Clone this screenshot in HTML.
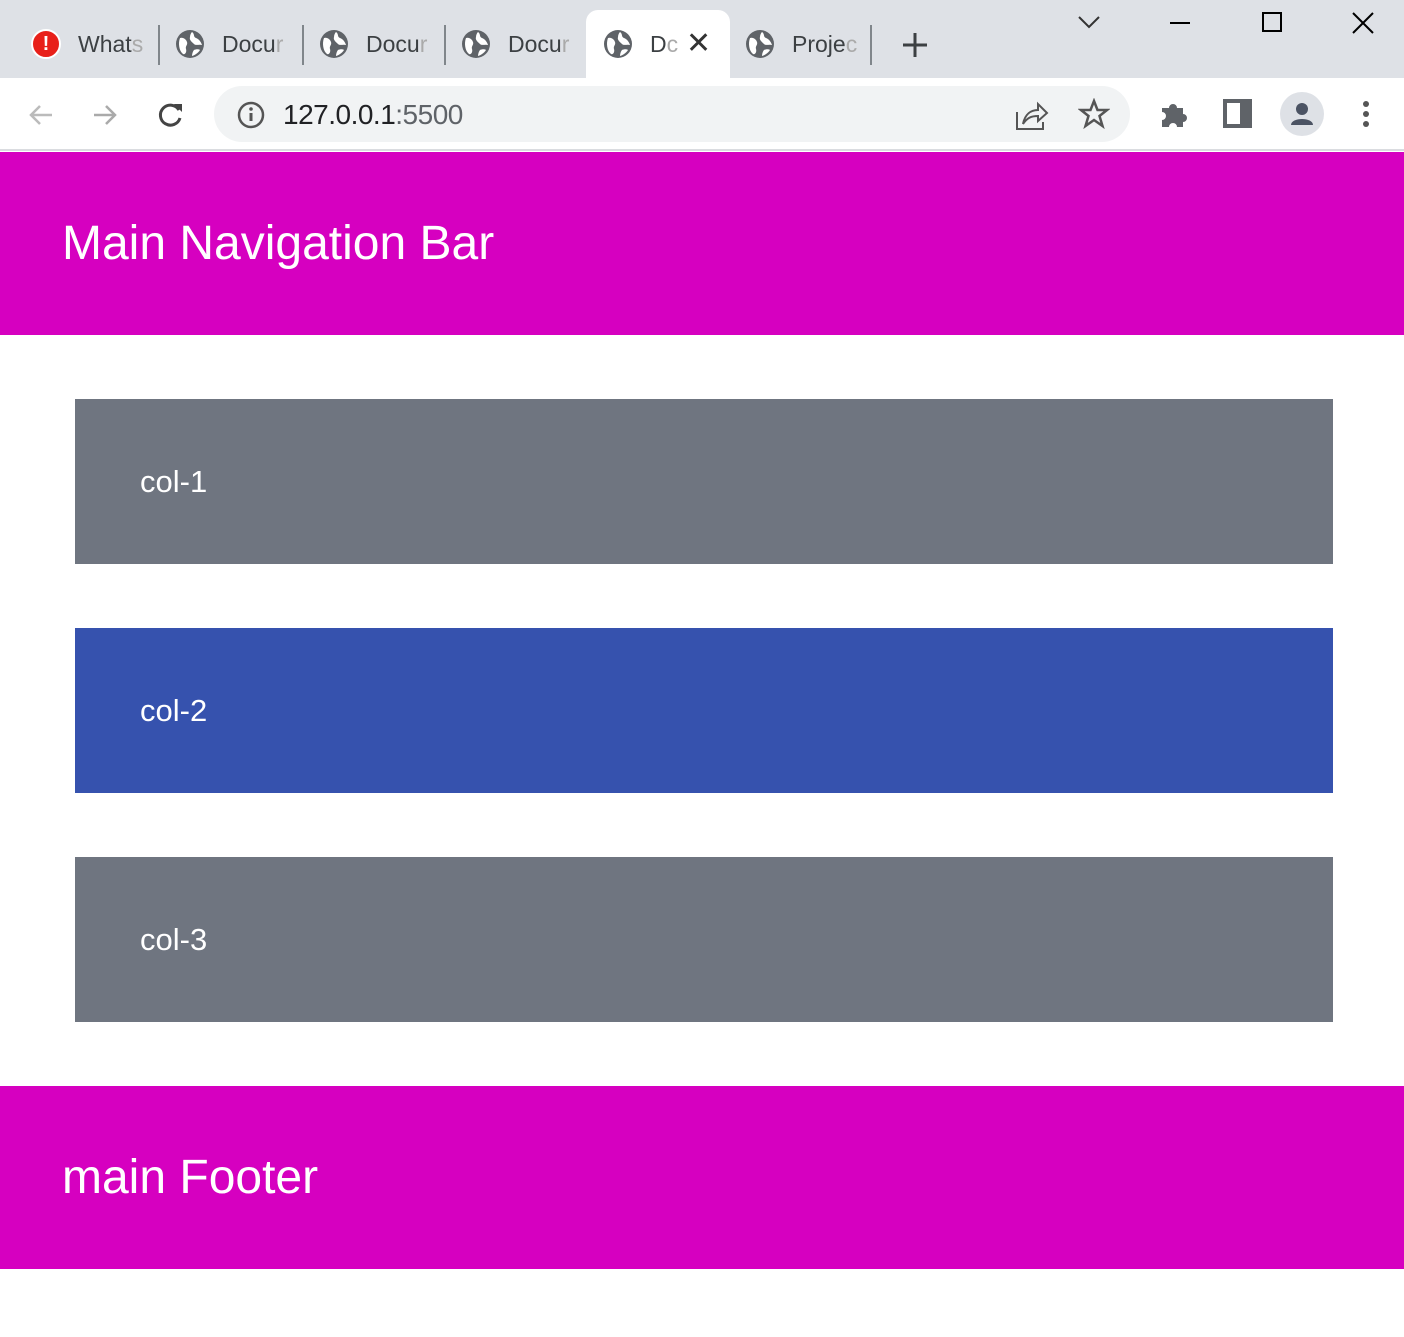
<!DOCTYPE html>
<html><head><style>
*{margin:0;padding:0;box-sizing:border-box}
body{width:1404px;height:1337px;background:#fff;font-family:"Liberation Sans",sans-serif;position:relative;overflow:hidden}
.abs{position:absolute}
.tabbar{left:0;top:0;width:1404px;height:78px;background:#dee1e6}
.tab{top:28px;font-size:23px;color:#3c4043;height:32px;line-height:32px}
.sep{top:25px;width:2px;height:40px;background:#80868b}
.globe{width:30px;height:30px}
.toolbar{left:0;top:78px;width:1404px;height:73px;background:#fff;border-bottom:2px solid #dadce0}
.omni{left:214px;top:86px;width:916px;height:56px;border-radius:28px;background:#f1f3f4}
.nav{left:0;top:152px;width:1404px;height:183px;background:#d600c0;color:#fff;font-size:48px;padding-left:62px;line-height:183px}
.box{left:75px;width:1258px;height:165px;color:#fff;font-size:31px;padding-left:65px;line-height:165px}
.foot{left:0;top:1086px;width:1404px;height:183px;background:#d600c0;color:#fff;font-size:48px;padding-left:62px;line-height:183px}
</style></head><body>
<svg width="0" height="0" style="position:absolute"><defs><g id="gl"><circle cx="15" cy="15" r="14" fill="#5f6368"/><path d="M5 9C8 8 11 10 12 13C13 16 10 17 11 20C12 23 10 26 8 25C4 22 3 14 5 9Z" fill="#fff"/><path d="M17 3C20 5 18 8 21 9C24 10 26 13 27 16C24 15 21 17 19 15C17 13 14 11 15 8C15 6 16 4 17 3Z" fill="#fff"/><path d="M19 21C21 20 24 20 25 21C23 24 20 26 17 27C17 25 18 22 19 21Z" fill="#fff"/></g></defs></svg>
<div class="abs tabbar"></div>
<div class="abs" style="left:586px;top:10px;width:144px;height:70px;background:#fff;border-radius:12px 12px 0 0"></div>
<div class="abs" style="left:31px;top:29px;width:30px;height:30px;border-radius:50%;background:#e8201a;border:2px solid #fff;color:#fff;font-weight:bold;font-size:20px;text-align:center;line-height:26px">!</div>
<div class="abs tab" style="left:78px">What<span style="color:#aaa">s</span></div>
<div class="abs sep" style="left:158px"></div>
<svg class="abs globe" style="left:175px;top:29px"><use href="#gl"/></svg>
<div class="abs tab" style="left:222px">Docu<span style="color:#aaa">r</span></div>
<div class="abs sep" style="left:302px"></div>
<svg class="abs globe" style="left:319px;top:29px"><use href="#gl"/></svg>
<div class="abs tab" style="left:366px">Docu<span style="color:#aaa">r</span></div>
<div class="abs sep" style="left:444px"></div>
<svg class="abs globe" style="left:461px;top:29px"><use href="#gl"/></svg>
<div class="abs tab" style="left:508px">Docu<span style="color:#aaa">r</span></div>
<svg class="abs globe" style="left:603px;top:29px"><use href="#gl"/></svg>
<div class="abs tab" style="left:650px">D<span style="color:#aaa">c</span></div>
<div class="abs tab" style="left:686px;font-size:30px;color:#333">✕</div>
<svg class="abs globe" style="left:745px;top:29px"><use href="#gl"/></svg>
<div class="abs tab" style="left:792px">Proje<span style="color:#aaa">c</span></div>
<div class="abs sep" style="left:870px"></div>
<svg class="abs" style="left:900px;top:30px" width="30" height="30"><path d="M15 3V27M3 15H27" stroke="#3c4043" stroke-width="3"/></svg>
<svg class="abs" style="left:1076px;top:12px" width="26" height="20"><path d="M3 5L13 15L23 5" stroke="#333" stroke-width="2" fill="none"/></svg>
<svg class="abs" style="left:1168px;top:12px" width="26" height="24"><path d="M2 11H22" stroke="#000" stroke-width="2"/></svg>
<svg class="abs" style="left:1260px;top:10px" width="26" height="26"><rect x="3" y="3" width="18" height="18" stroke="#000" stroke-width="2" fill="none"/></svg>
<svg class="abs" style="left:1350px;top:10px" width="26" height="26"><path d="M3 3L23 23M23 3L3 23" stroke="#000" stroke-width="2"/></svg>
<div class="abs toolbar"></div>
<svg class="abs" style="left:26px;top:100px" width="30" height="30"><path d="M26 15H5M14 6L5 15L14 24" stroke="#bbb" stroke-width="2.5" fill="none"/></svg>
<svg class="abs" style="left:90px;top:100px" width="30" height="30"><path d="M4 15H25M16 6L25 15L16 24" stroke="#aaa" stroke-width="2.5" fill="none"/></svg>
<svg class="abs" style="left:155px;top:99px" width="32" height="32"><path d="M24 11A10 10 0 1 0 25 19" stroke="#444" stroke-width="3" fill="none"/><path d="M19 5H27V13Z" fill="#444"/></svg>
<div class="abs omni"></div>
<svg class="abs" style="left:236px;top:100px" width="30" height="30"><circle cx="15" cy="15" r="12" stroke="#555" stroke-width="2.5" fill="none"/><path d="M15 13V21" stroke="#555" stroke-width="3"/><circle cx="15" cy="9" r="1.8" fill="#555"/></svg>
<div class="abs" style="left:283px;top:98px;font-size:28px;line-height:34px;color:#202124;letter-spacing:-0.5px">127.0.0.1<span style="color:#5f6368">:5500</span></div>
<svg class="abs" style="left:1013px;top:98px" width="36" height="34"><path d="M4 14V31H30V24" stroke="#555" stroke-width="2" fill="none"/><path d="M10 26C12 16 18 12 25 12V6L34 15L25 23V18C18 18 14 20 10 26Z" stroke="#555" stroke-width="2" fill="none"/></svg>
<svg class="abs" style="left:1078px;top:98px" width="32" height="32"><path d="M16 3L19.5 12H29L21.5 18L24.5 28L16 22L7.5 28L10.5 18L3 12H12.5Z" stroke="#555" stroke-width="2.5" fill="none"/></svg>
<svg class="abs" style="left:1158px;top:98px" width="32" height="32"><path d="M4 10H11A4 4 0 0 1 19 10H25V16A4 4 0 0 1 25 24V29H19A4 4 0 0 0 11 29H4V22A4 4 0 0 0 4 14Z" fill="#5f6368"/></svg>
<div class="abs" style="left:1223px;top:99px;width:29px;height:29px;border:4px solid #5f6368;border-right-width:12px"></div>
<div class="abs" style="left:1280px;top:92px;width:44px;height:44px;border-radius:50%;background:#dee1e6"></div>
<svg class="abs" style="left:1287px;top:99px" width="30" height="30"><circle cx="15" cy="10" r="6" fill="#4b5363"/><path d="M4 26C4 18 26 18 26 26Z" fill="#4b5363"/></svg>
<svg class="abs" style="left:1356px;top:98px" width="20" height="32"><circle cx="10" cy="6" r="3" fill="#555"/><circle cx="10" cy="16" r="3" fill="#555"/><circle cx="10" cy="26" r="3" fill="#555"/></svg>

<div class="abs nav">Main Navigation Bar</div>
<div class="abs box" style="top:399px;background:#6f7580">col-1</div>
<div class="abs box" style="top:628px;background:#3652ae">col-2</div>
<div class="abs box" style="top:857px;background:#6f7580">col-3</div>
<div class="abs foot">main Footer</div>
</body></html>
